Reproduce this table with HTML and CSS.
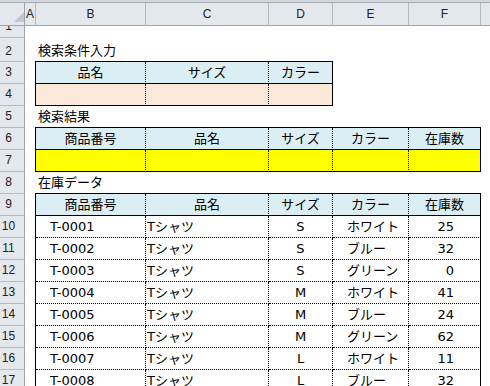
FILE: index.html
```html
<!DOCTYPE html>
<html lang="ja">
<head>
    <meta charset="UTF-8">
    <title>在庫検索</title>
    <link rel="stylesheet" href="styles.css">
</head>
<body>
    <div class="colbar">
        <div class="corner"><span></span></div>
        <div class="col col-a">A</div>
        <div class="col col-b">B</div>
        <div class="col col-c">C</div>
        <div class="col col-d">D</div>
        <div class="col col-e">E</div>
        <div class="col col-f">F</div>
        <div class="col col-g"></div>
    </div>

    <div class="sheet">
        <div class="rownums">
            <div class="rn r1">1</div>
            <div class="rn r2">2</div>
            <div class="rn">3</div>
            <div class="rn">4</div>
            <div class="rn">5</div>
            <div class="rn">6</div>
            <div class="rn">7</div>
            <div class="rn">8</div>
            <div class="rn">9</div>
            <div class="rn">10</div>
            <div class="rn">11</div>
            <div class="rn">12</div>
            <div class="rn">13</div>
            <div class="rn">14</div>
            <div class="rn">15</div>
            <div class="rn">16</div>
            <div class="rn">17</div>
        </div>

        <div class="cells">
            <div class="first">
                <div class="title">検索条件入力</div>
            </div>
            <div class="tbl cond">
                <div class="hd">品名</div>
                <div class="hd">サイズ</div>
                <div class="hd end">カラー</div>
                <div class="peach last"></div>
                <div class="peach last"></div>
                <div class="peach last end"></div>
            </div>

            <div class="title">検索結果</div>
            <div class="tbl">
                <div class="hd">商品番号</div>
                <div class="hd">品名</div>
                <div class="hd">サイズ</div>
                <div class="hd">カラー</div>
                <div class="hd end">在庫数</div>
                <div class="yellow last"></div>
                <div class="yellow last"></div>
                <div class="yellow last"></div>
                <div class="yellow last"></div>
                <div class="yellow last end"></div>
            </div>

            <div class="title">在庫データ</div>
            <div class="tbl" id="stock">
                <div class="hd">商品番号</div>
                <div class="hd">品名</div>
                <div class="hd">サイズ</div>
                <div class="hd">カラー</div>
                <div class="hd end">在庫数</div>

                <div class="id">T-0001</div><div class="name">Tシャツ</div><div class="size">S</div><div class="color">ホワイト</div><div class="qty end">25</div>
                <div class="id">T-0002</div><div class="name">Tシャツ</div><div class="size">S</div><div class="color">ブルー</div><div class="qty end">32</div>
                <div class="id">T-0003</div><div class="name">Tシャツ</div><div class="size">S</div><div class="color">グリーン</div><div class="qty end">0</div>
                <div class="id">T-0004</div><div class="name">Tシャツ</div><div class="size">M</div><div class="color">ホワイト</div><div class="qty end">41</div>
                <div class="id">T-0005</div><div class="name">Tシャツ</div><div class="size">M</div><div class="color">ブルー</div><div class="qty end">24</div>
                <div class="id">T-0006</div><div class="name">Tシャツ</div><div class="size">M</div><div class="color">グリーン</div><div class="qty end">62</div>
                <div class="id">T-0007</div><div class="name">Tシャツ</div><div class="size">L</div><div class="color">ホワイト</div><div class="qty end">11</div>
                <div class="id">T-0008</div><div class="name">Tシャツ</div><div class="size">L</div><div class="color">ブルー</div><div class="qty end">32</div>
            </div>
        </div>
    </div>
</body>
</html>
```

FILE: styles.css
```css
body {
    margin: 0;
    width: 490px;
    height: 386px;
    overflow: hidden;
    background: #fff;
    color: #000;
    font-family: "DejaVu Sans", "Noto Sans CJK JP", sans-serif;
    font-size: 13px;
}

/* column letters */
.colbar {
    display: flex;
    height: 26px;
    padding-top: 3px;
    box-sizing: border-box;
    background: linear-gradient(#d3d6db 0 2px, #a9aeb5 2px 3px, #e4e7eb 3px);
}

.col,
.corner {
    box-sizing: border-box;
    height: 23px;
    background: #e4e7eb;
    border-right: 1px solid #b4b9c0;
    border-bottom: 1px solid #9ea3aa;
}

.col {
    display: flex;
    align-items: center;
    justify-content: center;
    font-family: "Liberation Sans", Arial, sans-serif;
    font-size: 12px;
    color: #222;
}

.corner {
    width: 25px;
    display: flex;
    align-items: flex-end;
    justify-content: flex-end;
    padding: 0 0 3px 0;
    border-right-color: #9ea3aa;
}

.corner span {
    width: 10px;
    height: 10px;
    background: #c4c8ce;
    clip-path: polygon(100% 0, 100% 100%, 0 100%);
}

.col-a { width: 11px; }
.col-b { width: 110px; }
.col-c { width: 123px; }
.col-d { width: 64px; }
.col-e { width: 76px; }
.col-f { width: 72px; }
.col-g { flex: 1; border-right: none; }

/* row numbers + cells */
.sheet {
    display: flex;
}

.rownums {
    width: 25px;
    flex-shrink: 0;
}

.rn {
    box-sizing: border-box;
    height: 22px;
    overflow: hidden;
    display: flex;
    align-items: flex-end;
    justify-content: center;
    padding: 0 7px 4px 0;
    background: #e4e7eb;
    border-right: 1px solid #9ea3aa;
    border-bottom: 1px solid #b6bbc2;
    font-family: "Liberation Sans", Arial, sans-serif;
    font-size: 12px;
    line-height: 14px;
    color: #222;
}

.rn.r1 { height: 12px; }
.rn.r2 { height: 24px; padding-bottom: 3px; }

.cells {
    flex: 1;
    padding-left: 10px;
}

.first {
    height: 35px;
    display: flex;
    align-items: flex-end;
}

.title {
    height: 21px;
    line-height: 21px;
    padding-left: 3px;
    white-space: nowrap;
}

/* bordered tables */
.tbl {
    display: grid;
    grid-template-columns: 110px 123px 64px 76px 72px;
    width: max-content;
    border-top: 1px solid #000;
    border-left: 1px solid #000;
}

.tbl.cond {
    grid-template-columns: 110px 123px 64px;
}

.tbl > div {
    box-sizing: border-box;
    height: 22px;
    line-height: 21px;
    white-space: nowrap;
    overflow: hidden;
    border-right: 1px dotted #000;
    border-bottom: 1px dotted #000;
}

.tbl > .end { border-right: 1px solid #000; }
.tbl > .last { border-bottom: 1px solid #000; }

.tbl > .hd {
    background: #daeef3;
    text-align: center;
    border-bottom: 1px solid #000;
}

.peach { background: #fde9d9; }
.yellow { background: #ffff00; }

.id { padding-left: 14px; }
.name { padding-left: 1px; }
.size { text-align: center; }
.color { padding-left: 14px; }
.qty { text-align: right; padding-right: 26px; }
```
